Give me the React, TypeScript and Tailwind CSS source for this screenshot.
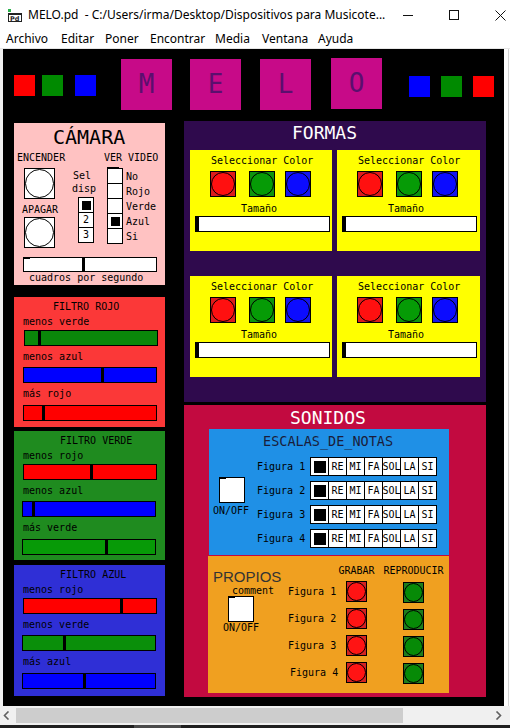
const mono = "font-['DejaVu_Sans_Mono',monospace]";
const ui = "font-['Noto_Sans','Open_Sans',sans-serif]";

type SliderProps = { bg: string; at: number; className?: string; nub?: boolean };

function Slider({ bg, at, className = "", nub = false }: SliderProps) {
  return (
    <div className={`relative flex h-[16px] w-[134px] shrink-0 border border-black ${bg} ${className}`}>
      {nub ? <div className="absolute -top-px -left-px h-[2px] w-[7px] bg-black" /> : null}
      <div className="shrink-0" style={{ width: at }} />
      <div className="w-[3px] shrink-0 bg-black" />
    </div>
  );
}

function Bang({ box, sq, dot }: { box: string; sq: string; dot: string }) {
  return (
    <div className={`flex shrink-0 items-center justify-center border border-black ${box} ${sq}`}>
      <div className={`h-full w-full rounded-full border border-black ${dot}`} />
    </div>
  );
}

function Toggle({ className = "" }: { className?: string }) {
  return (
    <div className={`relative h-[26px] w-[26px] shrink-0 border border-black bg-white ${className}`}>
      <div className="absolute -top-px -left-px h-[2px] w-[7px] bg-black" />
    </div>
  );
}

function VRadio({
  count,
  selected,
  nub = false,
  labels = [],
}: {
  count: number;
  selected: number;
  nub?: boolean;
  labels?: string[];
}) {
  return (
    <div className="relative flex w-[16px] shrink-0 flex-col">
      {nub ? <div className="absolute -top-px left-0 z-10 h-[2px] w-[12px] bg-black" /> : null}
      {Array.from({ length: count }).map((_, i) => (
        <div
          key={i}
          className={
            i === 0
              ? "flex h-[16px] w-[16px] items-center justify-center border border-black bg-white"
              : "-mt-px flex h-[16px] w-[16px] items-center justify-center border border-black bg-white"
          }
        >
          {i === selected ? (
            <div className="h-[9px] w-[9px] bg-black" />
          ) : (
            <span className="text-[10px] leading-[12px]">{labels[i] ?? ""}</span>
          )}
        </div>
      ))}
    </div>
  );
}

const notes = ["", "RE", "MI", "FA", "SOL", "LA", "SI"];

function NoteRadio() {
  return (
    <div className="ml-[5px] flex">
      {notes.map((n, i) => (
        <div
          key={i}
          className={
            i === 0
              ? "flex h-[19px] w-[19px] items-center justify-center border border-black bg-white"
              : "-ml-px flex h-[19px] w-[19px] items-center justify-center border border-black bg-white"
          }
        >
          {i === 0 ? (
            <div className="h-[12px] w-[12px] bg-black" />
          ) : (
            <span className={`${mono} whitespace-nowrap text-[10px] leading-[12px] text-black`}>{n}</span>
          )}
        </div>
      ))}
    </div>
  );
}

type FilterRow = { label: string; bg: string; at: number; ml: string };

function FilterPanel({
  title,
  titleMl,
  bg,
  rows,
  h,
}: {
  title: string;
  titleMl: string;
  bg: string;
  rows: FilterRow[];
  h: string;
}) {
  const labelMt = ["mt-[3px]", "mt-[5px]", "mt-[5px]"];
  const sliderMt = ["mt-[2px]", "mt-[4px]", "mt-[5px]"];
  return (
    <div className={`flex w-[151px] flex-col pt-[4px] ${bg} ${h} ${mono} text-[10px] leading-[12px] text-black`}>
      <span className={titleMl}>{title}</span>
      {rows.map((r, i) => (
        <div key={r.label} className="flex flex-col">
          <span className={`ml-[9px] ${labelMt[i]}`}>{r.label}</span>
          <Slider bg={r.bg} at={r.at} className={`${r.ml} ${sliderMt[i]}`} />
        </div>
      ))}
    </div>
  );
}

function ShapeCard() {
  return (
    <div className={`flex h-[101px] flex-col bg-[#ffff00] pt-[5px] ${mono} text-[10px] leading-[12px] text-black`}>
      <span className="ml-[21px]">Seleccionar Color</span>
      <div className="mt-[4px] flex">
        <Bang box="ml-[20px] h-[26px] w-[26px]" sq="bg-[#dc1c1c]" dot="bg-[#ff1010]" />
        <Bang box="ml-[13px] h-[26px] w-[26px]" sq="bg-[#0e930e]" dot="bg-[#069b06]" />
        <Bang box="ml-[10px] h-[26px] w-[26px]" sq="bg-[#1616ee]" dot="bg-[#0c0cff]" />
      </div>
      <span className="ml-[51px] mt-[6px]">Tamaño</span>
      <Slider bg="bg-white" at={0} className="ml-[5px] mt-[1px] !w-[135px]" />
    </div>
  );
}

function TitleBar() {
  return (
    <div className={`flex h-[30px] items-center bg-white ${ui}`}>
      <svg width="14" height="13" viewBox="0 0 14 13" className="ml-[8px] shrink-0">
        <rect x="0" y="0" width="3" height="3" fill="#2bb24c" />
        <rect x="0.5" y="4.5" width="13" height="8" fill="white" stroke="#222" />
        <rect x="0" y="4" width="14" height="2" fill="#222" />
        <text x="2" y="12" fontSize="6.5" fontFamily="DejaVu Sans" fontWeight="bold" fill="#222">
          Pd
        </text>
      </svg>
      <span className="ml-[6px] flex-1 whitespace-pre text-[12px] text-black">
        {"MELO.pd  - C:/Users/irma/Desktop/Dispositivos para Musicote..."}
      </span>
      <div className="mr-[1px] flex">
        <div className="flex h-[30px] w-[46px] items-center justify-center">
          <svg width="10" height="10" viewBox="0 0 10 10">
            <line x1="0" y1="5.5" x2="10" y2="5.5" stroke="#111" strokeWidth="1" />
          </svg>
        </div>
        <div className="flex h-[30px] w-[46px] items-center justify-center">
          <svg width="10" height="10" viewBox="0 0 10 10">
            <rect x="0.5" y="0.5" width="9" height="9" fill="none" stroke="#111" strokeWidth="1" />
          </svg>
        </div>
        <div className="flex h-[30px] w-[46px] items-center justify-center">
          <svg width="11" height="11" viewBox="0 0 11 11">
            <path d="M0.5 0.5 L10.5 10.5 M10.5 0.5 L0.5 10.5" stroke="#111" strokeWidth="1" />
          </svg>
        </div>
      </div>
    </div>
  );
}

function MenuBar() {
  return (
    <div className={`flex h-[19px] items-center border-b border-[#e6e6e6] bg-white pl-[6px] text-[12px] text-black ${ui}`}>
      <span className="w-[55px]">Archivo</span>
      <span className="w-[44px]">Editar</span>
      <span className="w-[45px]">Poner</span>
      <span className="w-[65px]">Encontrar</span>
      <span className="w-[47px]">Media</span>
      <span className="w-[56px]">Ventana</span>
      <span>Ayuda</span>
    </div>
  );
}

function HeaderRow() {
  const letter = `flex h-[51px] w-[51px] items-center justify-center bg-[#c70a88] ${mono} text-[26px] text-[#5b0f6e]`;
  return (
    <div className="flex h-[72px] items-start">
      <div className="ml-[11px] mt-[26px] h-[21px] w-[21px] bg-[#ff0000]" />
      <div className="ml-[7px] mt-[26px] h-[21px] w-[21px] bg-[#008a00]" />
      <div className="ml-[12px] mt-[26px] h-[21px] w-[21px] bg-[#0000ff]" />
      <div className={`ml-[25px] mt-[10px] ${letter}`}>M</div>
      <div className={`ml-[18px] mt-[10px] ${letter}`}>E</div>
      <div className={`ml-[19px] mt-[10px] ${letter}`}>L</div>
      <div className={`ml-[20px] mt-[9px] ${letter}`}>O</div>
      <div className="ml-[27px] mt-[27px] h-[21px] w-[21px] bg-[#0000ff]" />
      <div className="ml-[11px] mt-[27px] h-[21px] w-[21px] bg-[#008a00]" />
      <div className="ml-[11px] mt-[27px] h-[21px] w-[21px] bg-[#ff0000]" />
    </div>
  );
}

function CameraPanel() {
  const videoLabels = ["No", "Rojo", "Verde", "Azul", "Si"];
  return (
    <div className={`flex h-[162px] w-[151px] flex-col bg-[#ffc2c2] ${mono} text-[10px] leading-[12px] text-black`}>
      <span className="ml-[39px] mt-[4px] text-[20px] leading-[21px]">CÁMARA</span>
      <div className="mt-[4px] flex items-start">
        <div className="ml-[3px] flex w-[48px] flex-col">
          <span>ENCENDER</span>
          <Bang box="ml-[7px] mt-[4px] h-[31px] w-[31px]" sq="bg-white" dot="bg-white" />
          <span className="ml-[5px] mt-[5px]">APAGAR</span>
          <Bang box="ml-[7px] mt-[1px] h-[31px] w-[31px]" sq="bg-white" dot="bg-white" />
        </div>
        <div className="ml-[7px] flex w-[26px] flex-col">
          <span className="ml-[1px] mt-[18px]">Sel</span>
          <span className="mt-[1px]">disp</span>
          <div className="ml-[6px] mt-[2px] flex">
            <VRadio count={3} selected={0} labels={["", "2", "3"]} />
          </div>
        </div>
        <div className="ml-[6px] flex flex-col">
          <span>VER VIDEO</span>
          <div className="ml-[3px] mt-[4px] flex">
            <VRadio count={5} selected={3} nub />
            <div className="ml-[3px] flex flex-col pt-[1px]">
              {videoLabels.map((l) => (
                <span key={l} className="h-[15px] leading-[15px]">
                  {l}
                </span>
              ))}
            </div>
          </div>
        </div>
      </div>
      <Slider bg="bg-white" at={58} nub className="ml-[9px] mt-[9px] !h-[15px]" />
      <span className="ml-[15px] leading-[11px]">cuadros por segundo</span>
    </div>
  );
}

function ScalesPanel() {
  return (
    <div className={`ml-[25px] mt-[1px] flex h-[126px] w-[240px] flex-col bg-[#1f90e6] pt-[4px] ${mono} text-black`}>
      <span className="ml-[54px] text-[13.5px] leading-[16px] text-[#1a1d3a]">ESCALAS_DE_NOTAS</span>
      <div className="flex items-start">
        <div className="flex w-[48px] shrink-0 flex-col text-[10px] leading-[12px]">
          <Toggle className="ml-[10px] mt-[28px]" />
          <span className="ml-[4px] mt-[2px] whitespace-nowrap">ON/OFF</span>
        </div>
        <div className="mt-[8px] flex flex-col gap-[5px]">
          {[1, 2, 3, 4].map((i) => (
            <div key={i} className="flex h-[19px] items-center">
              <span className="w-[48px] shrink-0 whitespace-nowrap text-[10px] leading-[12px]">Figura {i}</span>
              <NoteRadio />
            </div>
          ))}
        </div>
      </div>
    </div>
  );
}

function OwnPanel() {
  return (
    <div className={`ml-[24px] mt-[1px] flex h-[137px] w-[241px] bg-[#f0a020] ${mono} text-[10px] leading-[12px] text-black`}>
      <div className="flex w-[80px] shrink-0 flex-col pt-[12px]">
        <span className="ml-[5px] font-['Liberation_Sans',sans-serif] text-[15px] leading-[18px] text-[#333333]">
          PROPIOS
        </span>
        <span className="ml-[24px] leading-[10px]">comment</span>
        <Toggle className="ml-[20px]" />
        <span className="ml-[15px]">ON/OFF</span>
      </div>
      <div className="flex flex-col pt-[9px]">
        <div className="flex">
          <div className="w-[58px]" />
          <div className="flex w-[21px] justify-center whitespace-nowrap">GRABAR</div>
          <div className="w-[36px]" />
          <div className="flex w-[21px] justify-center whitespace-nowrap">REPRODUCIR</div>
        </div>
        <div className="mt-[4px] flex flex-col gap-[6px]">
          {[1, 2, 3, 4].map((i) => (
            <div key={i} className="flex h-[21px] items-center">
              <span className={i === 4 ? "ml-[2px] w-[56px] whitespace-nowrap" : "w-[58px] whitespace-nowrap"}>
                Figura {i}
              </span>
              <Bang box="h-[21px] w-[21px]" sq="bg-[#d42222]" dot="bg-[#ff1414]" />
              <div className="w-[36px]" />
              <Bang box="mt-[2px] h-[21px] w-[21px]" sq="bg-[#1d7d1d]" dot="bg-[#078a07]" />
            </div>
          ))}
        </div>
      </div>
    </div>
  );
}

export default function App() {
  return (
    <div className="flex h-[728px] w-[510px] flex-col overflow-hidden bg-white">
      <TitleBar />
      <MenuBar />
      <div className="flex">
        <div className="w-[3px] bg-[#f0f0f0]" />
        <div className="flex h-[657px] w-[501px] flex-col bg-black">
          <HeaderRow />
          <div className="flex items-start">
            <div className="ml-[11px] mt-[2px] flex w-[151px] flex-col">
              <CameraPanel />
              <div className="mt-[12px]">
                <FilterPanel
                  title="FILTRO ROJO"
                  titleMl="ml-[39px]"
                  bg="bg-[#fb3838]"
                  h="h-[130px]"
                  rows={[
                    { label: "menos verde", bg: "bg-[#0a870a]", at: 13, ml: "ml-[10px]" },
                    { label: "menos azul", bg: "bg-[#0000ff]", at: 77, ml: "ml-[9px]" },
                    { label: "más rojo", bg: "bg-[#ff0000]", at: 18, ml: "ml-[9px]" },
                  ]}
                />
              </div>
              <div className="mt-[4px]">
                <FilterPanel
                  title="FILTRO VERDE"
                  titleMl="ml-[46px]"
                  bg="bg-[#1f8b1f]"
                  h="h-[129px]"
                  rows={[
                    { label: "menos rojo", bg: "bg-[#ff0000]", at: 66, ml: "ml-[9px]" },
                    { label: "menos azul", bg: "bg-[#0000ff]", at: 9, ml: "ml-[8px]" },
                    { label: "más verde", bg: "bg-[#079a07]", at: 82, ml: "ml-[8px]" },
                  ]}
                />
              </div>
              <div className="mt-[5px]">
                <FilterPanel
                  title="FILTRO AZUL"
                  titleMl="ml-[46px]"
                  bg="bg-[#2f2fd6]"
                  h="h-[131px]"
                  rows={[
                    { label: "menos rojo", bg: "bg-[#ff0000]", at: 96, ml: "ml-[9px]" },
                    { label: "menos verde", bg: "bg-[#0a8f0a]", at: 40, ml: "ml-[8px]" },
                    { label: "más azul", bg: "bg-[#0000ff]", at: 60, ml: "ml-[8px]" },
                  ]}
                />
              </div>
            </div>
            <div className="ml-[19px] flex w-[302px] flex-col">
              <div className="flex h-[281px] flex-col bg-[#2f0a4d] pt-[2px]">
                <span className={`ml-[108px] ${mono} text-[18px] leading-[20px] text-white`}>FORMAS</span>
                <div className="ml-[6px] mt-[7px] grid grid-cols-[142px_143px] gap-x-[5px] gap-y-[25px]">
                  <ShapeCard />
                  <ShapeCard />
                  <ShapeCard />
                  <ShapeCard />
                </div>
              </div>
              <div className="mt-[3px] flex h-[292px] flex-col bg-[#c20a40] pt-[3px]">
                <span className={`ml-[106px] ${mono} text-[18px] leading-[20px] text-white`}>SONIDOS</span>
                <ScalesPanel />
                <OwnPanel />
              </div>
            </div>
          </div>
        </div>
        <div className="flex w-[6px] bg-white">
          <div className="ml-[4px] w-px bg-[#d4d4d4]" />
        </div>
      </div>
      <div className="flex h-[19px] items-center bg-[#f0f0f0]">
        <svg width="7" height="9" viewBox="0 0 7 9" className="ml-[3px] shrink-0">
          <path d="M5.5 0.5 L1.5 4.5 L5.5 8.5" fill="none" stroke="#606060" strokeWidth="1.6" />
        </svg>
        <div className="ml-[6px] h-[15px] w-[387px] bg-[#cdcdcd]" />
        <div className="flex-1" />
        <svg width="7" height="9" viewBox="0 0 7 9" className="mr-[8px] shrink-0">
          <path d="M1.5 0.5 L5.5 4.5 L1.5 8.5" fill="none" stroke="#606060" strokeWidth="1.6" />
        </svg>
      </div>
      <div className="flex h-[3px] bg-[#1f1f1f]">
        <div className="ml-[134px] w-[47px] bg-[#4a4a4a]" />
      </div>
    </div>
  );
}
